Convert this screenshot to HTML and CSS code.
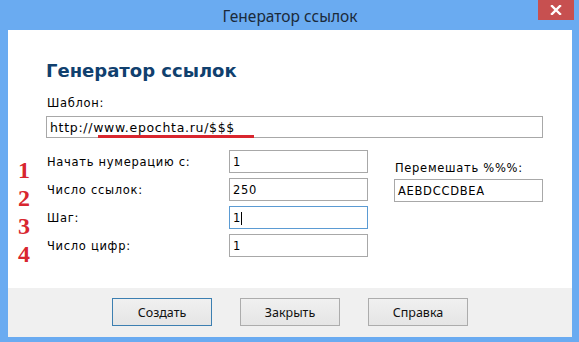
FILE: index.html
```html
<!DOCTYPE html>
<html lang="ru">
<head>
<meta charset="utf-8">
<title>Генератор ссылок</title>
<link rel="stylesheet" href="styles.css">
</head>
<body>
<div class="window">
  <div class="titlebar">
    <span class="title">Генератор ссылок</span>
    <div class="close"><svg width="12" height="10" viewBox="0 0 12 10"><path d="M2 1 L10 9 M10 1 L2 9" stroke="#fff" stroke-width="2.4" stroke-linecap="square"/></svg></div>
  </div>
  <div class="client">
    <div class="content">
      <h1 class="heading">Генератор ссылок</h1>
      <div class="label">Шаблон:</div>
      <div class="template-wrap">
        <div class="textbox wide">http://www.epochta.ru/$$$</div>
        <div class="underline"></div>
      </div>
      <div class="params">
        <div class="rows">
          <div class="row">
            <span class="num">1</span>
            <span class="row-label">Начать нумерацию с:</span>
            <div class="textbox small">1</div>
          </div>
          <div class="row">
            <span class="num">2</span>
            <span class="row-label">Число ссылок:</span>
            <div class="textbox small">250</div>
          </div>
          <div class="row">
            <span class="num">3</span>
            <span class="row-label">Шаг:</span>
            <div class="textbox small focused">1<span class="caret"></span></div>
          </div>
          <div class="row">
            <span class="num">4</span>
            <span class="row-label">Число цифр:</span>
            <div class="textbox small">1</div>
          </div>
        </div>
        <div class="shuffle">
          <div class="label">Перемешать %%%:</div>
          <div class="textbox medium">AEBDCCDBEA</div>
        </div>
      </div>
    </div>
    <div class="footer">
      <button class="btn default">Создать</button>
      <button class="btn">Закрыть</button>
      <button class="btn">Справка</button>
    </div>
  </div>
</div>
</body>
</html>
```
FILE: styles.css
```css
html, body {
  margin: 0;
  padding: 0;
}
body {
  width: 579px;
  height: 342px;
  overflow: hidden;
  font-family: "DejaVu Sans", Verdana, sans-serif;
}
.window {
  width: 579px;
  height: 342px;
  box-sizing: border-box;
  background: #6aabf1;
  padding: 0 7px 5px 8px;
  display: flex;
  flex-direction: column;
  position: relative;
}
.titlebar {
  height: 30px;
  display: flex;
  align-items: center;
  justify-content: center;
}
.title {
  font-family: "Noto Sans", "Open Sans", sans-serif;
  font-size: 15.5px;
  color: #1b2a3a;
  margin-top: 1px;
}
.close {
  position: absolute;
  top: 0;
  right: 5px;
  width: 36px;
  height: 20px;
  background: #c75050;
  display: flex;
  align-items: center;
  justify-content: center;
}
.client {
  flex: 1;
  display: flex;
  flex-direction: column;
  background: #fff;
}
.content {
  height: 258px;
  box-sizing: border-box;
  padding: 30px 0 0 0;
}
.heading {
  margin: 0 0 15px 38px;
  font-size: 18px;
  line-height: 22px;
  font-weight: bold;
  color: #10406e;
}
.label,
.row-label,
.textbox {
  font-size: 11.5px;
  line-height: 13px;
  letter-spacing: 0.7px;
  color: #000;
}
.content > .label {
  margin-left: 39px;
}
.template-wrap {
  position: relative;
  margin: 6px 0 0 38px;
  width: 497px;
}
.textbox {
  box-sizing: border-box;
  border: 1px solid #a8a8a8;
  background: #fff;
  padding: 4px 3px 0 3px;
  white-space: nowrap;
}
.textbox.wide {
  width: 497px;
  height: 22px;
  font-size: 12.5px;
  letter-spacing: 0.7px;
}
.underline {
  position: absolute;
  left: 52px;
  top: 19px;
  width: 156px;
  height: 3px;
  background: #d9262e;
}
.params {
  display: flex;
  margin-top: 12px;
}
.rows {
  display: flex;
  flex-direction: column;
  gap: 5px;
  padding-left: 10px;
}
.row {
  display: grid;
  grid-template-columns: 29px 182px 139px;
  align-items: center;
  height: 23px;
}
.num {
  font-family: "Liberation Serif", "Times New Roman", serif;
  font-weight: bold;
  font-size: 24px;
  line-height: 23px;
  color: #d8262f;
  position: relative;
  top: 9px;
}
.row-label {
  position: relative;
  top: 1px;
}
.textbox.small {
  width: 139px;
  height: 23px;
  padding-top: 5px;
}
.textbox.focused {
  border-color: #5b9bd3;
}
.caret {
  display: inline-block;
  width: 1px;
  height: 13px;
  background: #000;
  vertical-align: top;
}
.shuffle {
  margin-left: 26px;
  padding-top: 12px;
  display: flex;
  flex-direction: column;
  gap: 4px;
}
.shuffle .label {
  margin-left: 1px;
}
.textbox.medium {
  width: 149px;
  height: 23px;
  padding-top: 5px;
}
.footer {
  flex: 1;
  background: #f0f0f0;
  display: flex;
  align-items: flex-start;
  padding: 10px 0 0 104px;
  gap: 28px;
}
.btn {
  width: 100px;
  height: 28px;
  box-sizing: border-box;
  border: 1px solid #acacac;
  background: linear-gradient(#f0f0f0, #e5e5e5);
  font-family: "Noto Sans", "Open Sans", sans-serif;
  font-size: 12.5px;
  color: #111;
  padding: 0;
  margin: 0;
}
.btn.default {
  border-color: #3c7fb1;
}
```
